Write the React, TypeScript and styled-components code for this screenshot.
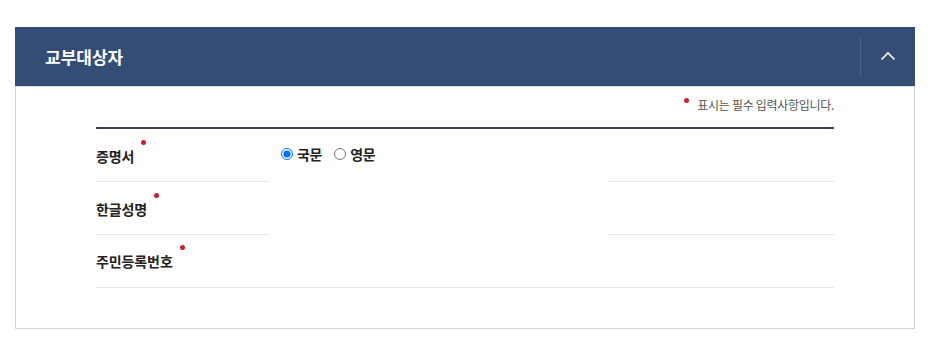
import React from "react";
import styled, { createGlobalStyle } from "styled-components";

const Global = createGlobalStyle`
  html, body { margin: 0; padding: 0; background: #fff; }
  body { font-family: "Noto Sans CJK KR", "Noto Sans", sans-serif; color: #222; }
`;

const Page = styled.div`
  padding: 27px 0 0 15px;
`;

const Panel = styled.section`
  width: 900px;
`;

const Header = styled.div`
  height: 59px;
  background: #344d77;
  display: flex;
  align-items: center;
  justify-content: space-between;
`;

const Title = styled.h2`
  margin: 0;
  padding-left: 30px;
  font-size: 17px;
  font-weight: 700;
  color: #fff;
  letter-spacing: 0;
`;

const ToggleButton = styled.button`
  width: 55px;
  height: 40px;
  border: 0;
  border-left: 1px solid #4b6189;
  background: transparent;
  display: flex;
  align-items: center;
  justify-content: center;
  padding: 0 0 2px 0;
  cursor: pointer;
`;

const Body = styled.div`
  border: 1px solid #d3d3d3;
  border-top-color: #dcdcdc;
  padding: 0 80px 40px 80px;
`;

const Notice = styled.p`
  margin: 0;
  padding: 9px 0 13px;
  line-height: 18px;
  font-size: 12px;
  letter-spacing: -0.3px;
  color: #555;
  text-align: right;
`;

const Dot = styled.span`
  display: inline-block;
  width: 5px;
  height: 5px;
  border-radius: 50%;
  background: #c8202a;
  vertical-align: 7px;
  margin-right: 8px;
`;

const Table = styled.div`
  border-top: 2px solid #3a4652;
`;

const Row = styled.div<{ $split?: boolean }>`
  display: grid;
  grid-template-columns: 173px 340px 1fr;
  height: 53px;
  box-sizing: border-box;
  border-bottom: ${(p) => (p.$split ? "0" : "1px solid #e6e6e6")};
`;

const Cell = styled.div<{ $line?: boolean }>`
  display: flex;
  align-items: center;
  box-sizing: border-box;
  border-bottom: ${(p) => (p.$line ? "1px solid #e6e6e6" : "1px solid transparent")};
`;

const LabelCell = styled(Cell)`
  padding-top: 1px;
`;

const Label = styled.span`
  position: relative;
  display: inline-block;
  font-size: 14px;
  font-weight: 700;
  letter-spacing: -0.1px;
  line-height: 20px;
  color: #222;
  &::after {
    content: "";
    position: absolute;
    right: -12px;
    top: -6px;
    width: 5px;
    height: 5px;
    border-radius: 50%;
    background: #c8202a;
  }
`;

const InputCell = styled(Cell)`
  padding-left: 12px;
  gap: 12px;
  align-items: center;
  padding-bottom: 2px;
`;

const RadioLabel = styled.label`
  display: inline-flex;
  align-items: center;
  gap: 4px;
  font-size: 14px;
  font-weight: 700;
  letter-spacing: -0.3px;
  color: #222;
  cursor: pointer;
`;

const Radio = styled.input`
  margin: 0;
  width: 12px;
  height: 12px;
`;

export default function App() {
  return (
    <>
      <Global />
      <Page>
        <Panel>
          <Header>
            <Title>교부대상자</Title>
            <ToggleButton aria-label="접기">
              <svg width="16" height="10" viewBox="0 0 16 10">
                <polyline
                  points="1.5,8.5 8,2 14.5,8.5"
                  fill="none"
                  stroke="#fff"
                  strokeWidth="1.6"
                />
              </svg>
            </ToggleButton>
          </Header>
          <Body>
            <Notice>
              <Dot />
              표시는 필수 입력사항입니다.
            </Notice>
            <Table>
              <Row $split>
                <LabelCell $line>
                  <Label>증명서</Label>
                </LabelCell>
                <InputCell>
                  <RadioLabel>
                    <Radio type="radio" name="cert" defaultChecked />
                    국문
                  </RadioLabel>
                  <RadioLabel>
                    <Radio type="radio" name="cert" />
                    영문
                  </RadioLabel>
                </InputCell>
                <Cell $line />
              </Row>
              <Row $split>
                <LabelCell $line>
                  <Label>한글성명</Label>
                </LabelCell>
                <Cell />
                <Cell $line />
              </Row>
              <Row>
                <LabelCell>
                  <Label>주민등록번호</Label>
                </LabelCell>
                <Cell />
                <Cell />
              </Row>
            </Table>
          </Body>
        </Panel>
      </Page>
    </>
  );
}
